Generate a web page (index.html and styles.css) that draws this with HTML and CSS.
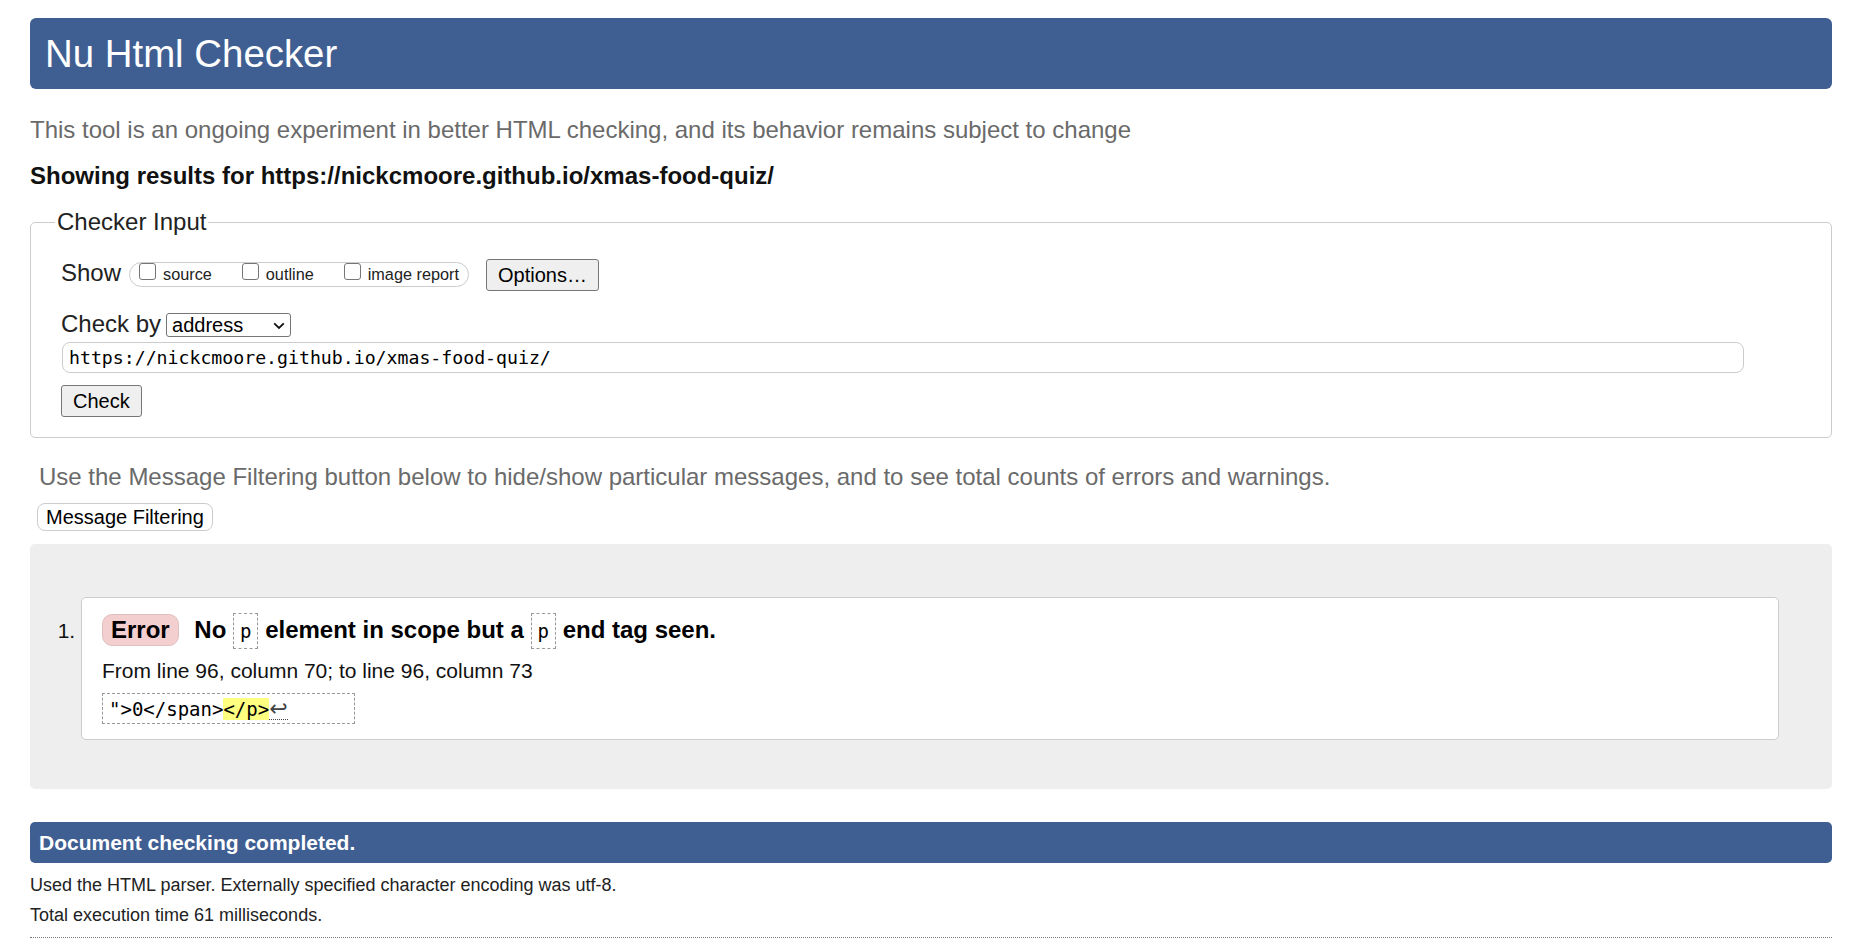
FILE: index.html
```html
<!DOCTYPE html>
<html lang="en">
<head>
<meta charset="utf-8">
<title>Showing results for https://nickcmoore.github.io/xmas-food-quiz/ - Nu Html Checker</title>
<link rel="stylesheet" href="styles.css">
</head>
<body>
<h1 class="title">Nu Html Checker</h1>
<p class="intro">This tool is an ongoing experiment in better HTML checking, and its behavior remains subject to change</p>
<p class="showing">Showing results for https://nickcmoore.github.io/xmas-food-quiz/</p>

<fieldset class="input-box">
  <legend class="legend">Checker Input</legend>
  <div class="row row-show">
    <span class="label">Show</span>
    <span class="options-group">
      <label class="opt"><input type="checkbox" class="cb"><span class="opt-text">source</span></label>
      <label class="opt"><input type="checkbox" class="cb"><span class="opt-text">outline</span></label>
      <label class="opt opt-last"><input type="checkbox" class="cb"><span class="opt-text">image report</span></label>
    </span>
    <button class="btn btn-options" type="button">Options…</button>
  </div>
  <div class="row row-by">
    <span class="label">Check by</span>
    <span class="select-wrap">
      <select class="select"><option>address</option></select>
      <svg class="chevron" width="12" height="8" viewBox="0 0 12 8"><path d="M1.2 1.3 L6 6 L10.8 1.3" fill="none" stroke="#111" stroke-width="1.8"/></svg>
    </span>
  </div>
  <input class="url" type="text" value="https://nickcmoore.github.io/xmas-food-quiz/">
  <button class="btn btn-check" type="button">Check</button>
</fieldset>

<p class="hint">Use the Message Filtering button below to hide/show particular messages, and to see total counts of errors and warnings.</p>
<button class="btn-filter" type="button">Message Filtering</button>

<div class="results">
  <ol class="messages">
    <li class="message">
      <p class="msg-head"><strong class="badge">Error</strong> No <code class="tag">p</code> element in scope but a <code class="tag">p</code> end tag seen.</p>
      <p class="location">From line 96, column 70; to line 96, column 73</p>
      <code class="extract">"&gt;0&lt;/span&gt;<mark class="hl">&lt;/p&gt;</mark><span class="lf">↩</span></code>
    </li>
  </ol>
</div>

<p class="done">Document checking completed.</p>
<p class="meta">Used the HTML parser. Externally specified character encoding was utf-8.</p>
<p class="meta meta-2">Total execution time 61 milliseconds.</p>
<hr class="rule">
</body>
</html>
```

FILE: styles.css
```css
* { box-sizing: border-box; }

html, body { margin: 0; }

body {
  font-family: "Liberation Sans", Arial, sans-serif;
  color: #222;
  background: #fff;
  padding: 18px 20px 0 30px;
}

.title {
  margin: 0;
  height: 71px;
  line-height: 71px;
  font-size: 38.4px;
  font-weight: normal;
  color: #fff;
  background: #3f5e92;
  border-radius: 6px;
  padding-left: 15px;
}

.intro {
  margin: 27px 0 0;
  font-size: 24px;
  line-height: 28px;
  color: #6a6a6a;
}

.showing {
  margin: 18px 0 0;
  font-size: 24px;
  line-height: 28px;
  font-weight: bold;
  color: #111;
}

.input-box {
  margin: 18px 0 0;
  min-width: 0;
  border: 1px solid #cccccc;
  border-radius: 5px;
  padding: 23px 28px 20px 30px;
}

.legend {
  font-size: 24px;
  line-height: 28px;
  padding: 0 2px;
  margin-left: -6px;
  color: #222;
}

.row { display: flex; }

.row-show {
  align-items: flex-start;
  height: 32px;
}

.label {
  font-size: 24px;
  line-height: 28px;
  color: #222;
}

.options-group {
  display: flex;
  align-items: flex-start;
  margin: 3px 0 0 8px;
  height: 25px;
  border: 1px solid #cccccc;
  border-radius: 13px;
  padding: 0 9px;
}

.opt {
  display: flex;
  align-items: flex-start;
  margin-right: 30px;
}

.opt-last { margin-right: 0; }

.cb {
  appearance: none;
  -webkit-appearance: none;
  width: 17px;
  height: 17px;
  margin: 0 7px 0 0;
  border: 1px solid #767676;
  border-radius: 3px;
  background: #fff;
}

.opt-text {
  font-size: 16.25px;
  line-height: 23px;
  color: #222;
}

.btn {
  font-family: "Liberation Sans", Arial, sans-serif;
  font-size: 20px;
  color: #000;
  height: 32px;
  line-height: 30px;
  padding: 0 11px;
  background: #efefef;
  border: 1px solid #767676;
  border-radius: 3px;
}

.btn-options { margin-left: 17px; }

.row-by {
  align-items: baseline;
  margin-top: 19px;
}

.select-wrap {
  position: relative;
  display: inline-block;
  margin-left: 5px;
}

.select {
  appearance: none;
  -webkit-appearance: none;
  width: 125px;
  height: 24px;
  border: 1px solid #767676;
  border-radius: 3px;
  background: #fff;
  color: #000;
  font-family: "Liberation Sans", Arial, sans-serif;
  font-size: 20px;
  line-height: 22px;
  padding: 0 0 0 5px;
}

.chevron {
  position: absolute;
  right: 6px;
  top: 9px;
  pointer-events: none;
}

.url {
  display: block;
  margin: 4px 0 0 1px;
  width: 1682px;
  height: 31px;
  border: 1px solid #cccccc;
  border-radius: 8px;
  padding: 0 6px;
  font-family: "DejaVu Sans Mono", monospace;
  font-size: 18.2px;
  color: #000;
  background: #fff;
}

.btn-check {
  display: block;
  margin-top: 12px;
}

.hint {
  margin: 25px 0 0 9px;
  font-size: 24px;
  line-height: 28px;
  color: #6a6a6a;
}

.btn-filter {
  display: block;
  margin: 12px 0 0 7px;
  height: 28px;
  line-height: 26px;
  padding: 0 8px;
  font-family: "Liberation Sans", Arial, sans-serif;
  font-size: 20px;
  color: #000;
  background: #fff;
  border: 1px solid #cccccc;
  border-radius: 8px;
}

.results {
  margin-top: 13px;
  background: #eeeeee;
  border-radius: 5px;
  padding: 53px 53px 49px 51px;
}

.messages {
  margin: 0;
  padding: 0;
  list-style: decimal outside;
}

.message {
  background: #fff;
  border: 1px solid #cccccc;
  border-radius: 5px;
  padding: 15px 20px 15px;
  font-size: 21px;
  color: #111;
}

.msg-head {
  margin: 0;
  font-size: 24px;
  line-height: 28px;
  font-weight: bold;
  color: #000;
}

.badge {
  display: inline-block;
  line-height: 30px;
  padding: 0 8px;
  margin-right: 9px;
  background: #f3cfcf;
  border: 1px solid #dfc0c0;
  border-radius: 10px;
}

.tag {
  display: inline-block;
  font-family: "DejaVu Sans Mono", monospace;
  font-weight: normal;
  font-size: 19px;
  line-height: 24px;
  padding: 5px 6px;
  border: 1px dashed #999;
}

.location {
  margin: 9px 0 0;
  font-size: 21px;
  line-height: 26px;
}

.extract {
  display: inline-block;
  margin-top: 9px;
  border: 1px dashed #999;
  padding: 3px 66px 2px 6px;
  font-family: "DejaVu Sans Mono", monospace;
  font-size: 19px;
  line-height: 24px;
  white-space: pre;
  color: #000;
}

.hl {
  background: #ffff80;
  color: #000;
}

.lf {
  display: inline-block;
  font-family: "DejaVu Sans", "Noto Sans", sans-serif;
  font-size: 22px;
  line-height: 21px;
  color: #444;
  border-bottom: 1px dotted #444;
}

.done {
  margin: 33px 0 0;
  height: 41px;
  line-height: 41px;
  padding-left: 9px;
  background: #3f5e92;
  color: #fff;
  font-size: 21px;
  font-weight: bold;
  border-radius: 5px;
}

.meta {
  margin: 11px 0 0;
  font-size: 18px;
  line-height: 22px;
  color: #222;
}

.meta-2 { margin-top: 8px; }

.rule {
  margin: 11px 0 0;
  border: 0;
  border-top: 1px dotted #777;
  height: 0;
}
```
